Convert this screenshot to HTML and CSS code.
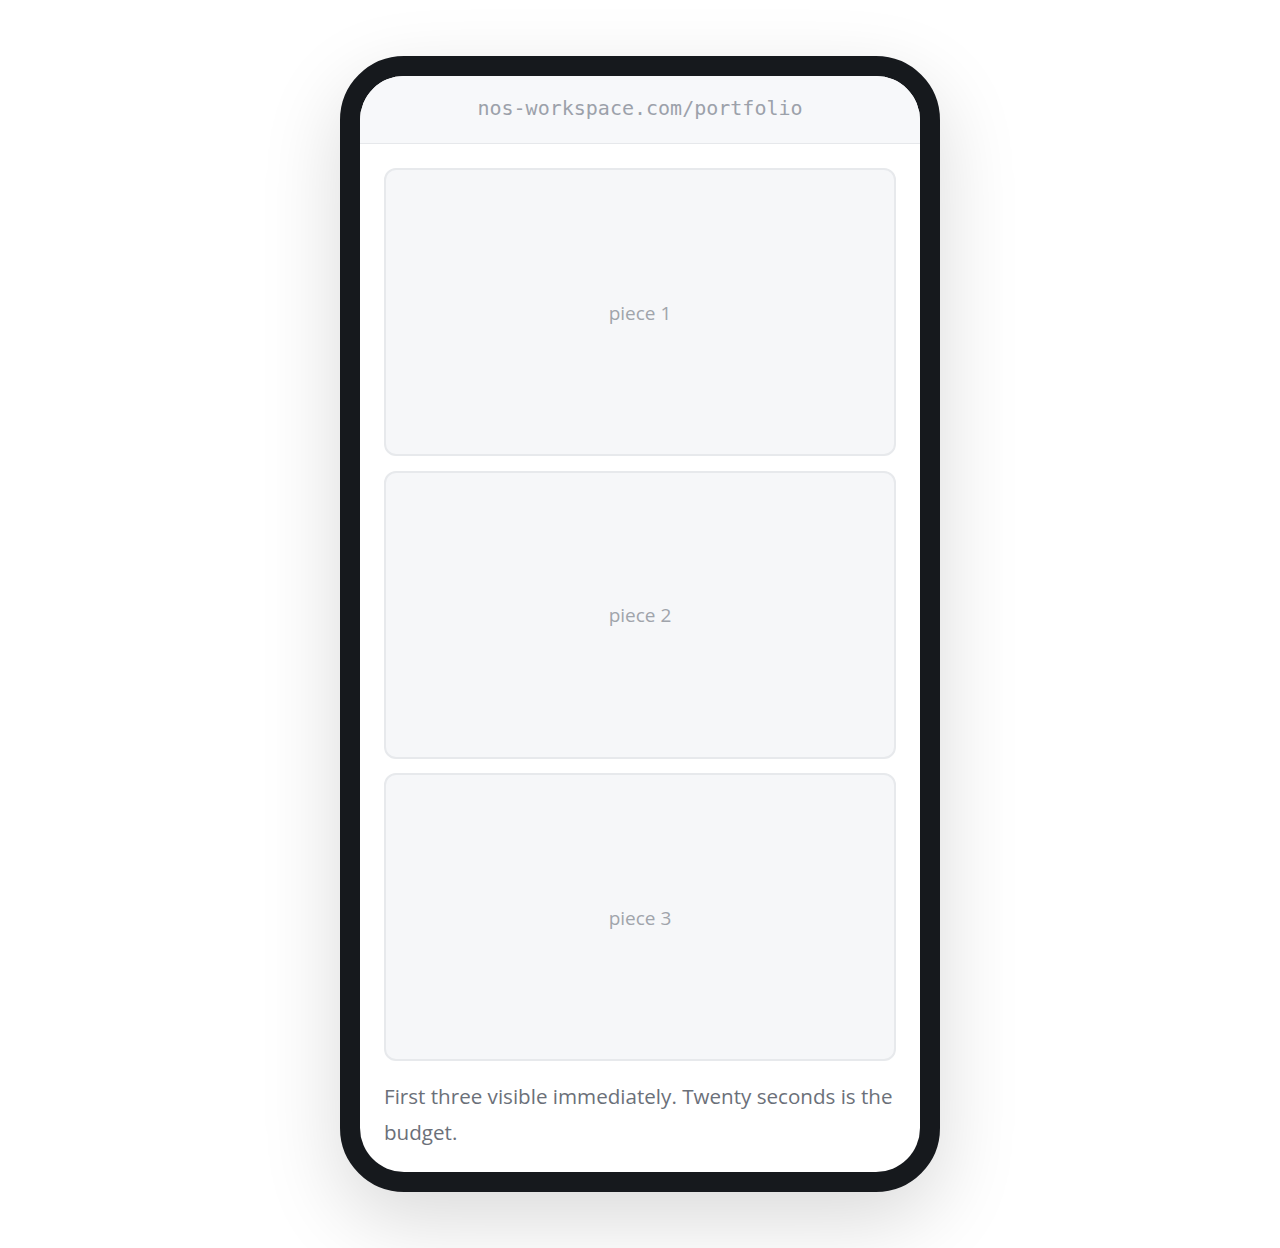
FILE: index.html
```html
<!DOCTYPE html>
<html lang="en">
<head>
<meta charset="utf-8">
<title>Portfolio</title>
<link rel="stylesheet" href="styles.css">
</head>
<body>
<div class="stage">
  <div class="phone">
    <div class="screen">
      <div class="urlbar">nos-workspace.com/portfolio</div>
      <div class="content">
        <div class="pieces">
          <div class="piece">piece 1</div>
          <div class="piece">piece 2</div>
          <div class="piece">piece 3</div>
        </div>
        <p class="caption">First three visible immediately. Twenty seconds is the budget.</p>
      </div>
    </div>
  </div>
</div>
</body>
</html>
```

FILE: styles.css
```css
html, body {
  margin: 0;
  padding: 0;
  background: #ffffff;
}
.stage {
  display: flex;
  justify-content: center;
  padding-top: 56px;
  height: 1248px;
  box-sizing: border-box;
}
.phone {
  width: 600px;
  height: 1136px;
  box-sizing: border-box;
  border: 20px solid #16191d;
  border-radius: 64px;
  background: #16191d;
  box-shadow: 0 28px 80px rgba(0, 0, 0, 0.15);
}
.screen {
  width: 560px;
  height: 1096px;
  border-radius: 44px;
  overflow: hidden;
  background: #ffffff;
  display: flex;
  flex-direction: column;
}
.urlbar {
  height: 68px;
  flex: none;
  box-sizing: border-box;
  border-bottom: 1px solid #e6e8eb;
  background: #f7f8fa;
  display: flex;
  align-items: center;
  justify-content: center;
  font-family: "DejaVu Sans Mono", "Liberation Mono", monospace;
  font-size: 20px;
  color: #9ca1aa;
  padding-bottom: 4px;
}
.content {
  padding: 24px 24px 0;
}
.pieces {
  display: flex;
  flex-direction: column;
  gap: 14.5px;
}
.piece {
  height: 288px;
  box-sizing: border-box;
  border: 2px solid #e7e9ec;
  border-radius: 12px;
  background: #f6f7f9;
  display: flex;
  align-items: center;
  justify-content: center;
  font-family: "Open Sans", "Noto Sans", sans-serif;
  font-size: 19px;
  color: #a0a4ab;
  padding-top: 1px;
}
.caption {
  margin: 17px 0 0;
  font-family: "Open Sans", "Noto Sans", sans-serif;
  font-size: 20.6px;
  line-height: 36px;
  color: #6b7079;
}
```
